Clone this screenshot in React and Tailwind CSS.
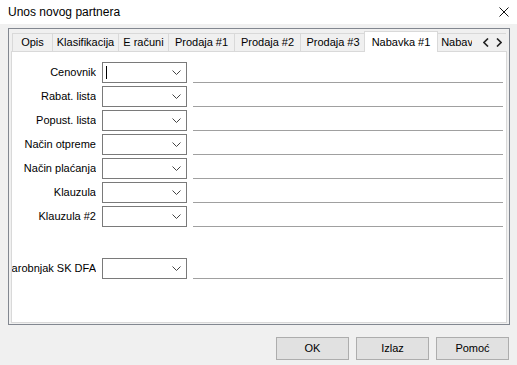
import React from 'react';

const tabs = [
    { label: 'Opis', w: 'w-[41px]' },
    { label: 'Klasifikacija', w: 'w-[66px]' },
    { label: 'E računi', w: 'w-[50px]' },
    { label: 'Prodaja #1', w: 'w-[66px]' },
    { label: 'Prodaja #2', w: 'w-[66px]' },
    { label: 'Prodaja #3', w: 'w-[65px]' },
    { label: 'Nabavka #1', w: 'w-[74px]', active: true },
    { label: 'Nabavka #2', w: 'w-[70px]' },
];

const rows = [
    { label: 'Cenovnik', cursor: true },
    { label: 'Rabat. lista' },
    { label: 'Popust. lista' },
    { label: 'Način otpreme' },
    { label: 'Način plaćanja' },
    { label: 'Klauzula' },
    { label: 'Klauzula #2' },
    { label: 'Čarobnjak SK DFA', spaced: true },
];

const Chevron = ({ dir = 'down' }) => {
    if (dir === 'left') {
        return (
            <svg width="6" height="9" viewBox="0 0 6 9">
                <path d="M5 0.5 L1 4.5 L5 8.5" fill="none" stroke="#222" strokeWidth="1.6" />
            </svg>
        );
    }
    if (dir === 'right') {
        return (
            <svg width="6" height="9" viewBox="0 0 6 9">
                <path d="M1 0.5 L5 4.5 L1 8.5" fill="none" stroke="#222" strokeWidth="1.6" />
            </svg>
        );
    }
    return (
        <svg width="9" height="5" viewBox="0 0 9 5">
            <path d="M0.5 0.5 L4.5 4.5 L8.5 0.5" fill="none" stroke="#444" strokeWidth="1" />
        </svg>
    );
};

const FormRow = ({ label, cursor, spaced }) => (
    <div className={`flex items-end h-[21px] ${spaced ? 'mt-[28px]' : ''}`}>
        <div className="w-[84px] h-[21px] flex items-center justify-end overflow-hidden whitespace-nowrap text-black">
            {label}
        </div>
        <div className="ml-[6px] w-[85px] h-[21px] border border-[#7a7a7a] bg-white flex items-center justify-between pl-[3px] pr-[5px]">
            {cursor ? <div className="w-px h-[13px] bg-black"></div> : <div></div>}
            <Chevron />
        </div>
        <div className="ml-[6px] w-[310px] h-px bg-[#a0a0a0]"></div>
    </div>
);

const DialogButton = ({ children }) => (
    <button className="w-[73px] h-[23px] bg-[#e1e1e1] border border-[#adadad] text-black text-[11px]">
        {children}
    </button>
);

export default function App() {
    return (
        <div className="w-[517px] h-[365px] bg-[#f0f0f0] flex flex-col text-[11px] font-['Liberation_Sans',Arial,sans-serif] overflow-hidden select-none">
            {/* Title bar */}
            <div className="h-[24px] bg-white flex items-center justify-between pl-[8px] pr-[8px]">
                <span className="text-[12px] text-black">Unos novog partnera</span>
                <svg width="10" height="10" viewBox="0 0 10 10">
                    <path d="M0.5 0.5 L9.5 9.5 M9.5 0.5 L0.5 9.5" stroke="#111" strokeWidth="1" />
                </svg>
            </div>

            {/* Frame */}
            <div className="mt-[4px] ml-[8px] mr-[7px] h-[297px] border border-[#828790] pt-[2px] px-[1px] pb-[1px] flex flex-col">
                {/* Tab strip */}
                <div className="relative z-10 h-[21px] mb-[-1px] overflow-hidden flex items-start pl-[2px]">
                    {tabs.map((t, i) =>
                        t.active ? (
                            <div
                                key={t.label}
                                className={`${t.w} shrink-0 h-[21px] -ml-[2px] -mr-[2px] relative z-10 bg-white border border-b-0 border-[#d9d9d9] flex items-center justify-center text-black`}
                            >
                                {t.label}
                            </div>
                        ) : (
                            <div
                                key={t.label}
                                className={`${t.w} shrink-0 h-[18px] mt-[2px] bg-[#f0f0f0] border-t border-r ${i === 0 ? 'border-l' : ''} border-[#d9d9d9] flex items-center justify-center whitespace-nowrap overflow-hidden text-black`}
                            >
                                {t.label}
                            </div>
                        )
                    )}
                    <div className="absolute right-0 top-[3px] w-[36px] h-[17px] bg-[#f0f0f0] z-20 flex items-center justify-between pl-[11px] pr-[6px]">
                        <Chevron dir="left" />
                        <Chevron dir="right" />
                    </div>
                </div>

                {/* Tab page */}
                <div className="flex-1 ml-[1px] mr-px bg-white border border-[#d9d9d9] pt-[10px] flex flex-col gap-[3px]">
                    {rows.map((r) => (
                        <FormRow key={r.label} {...r} />
                    ))}
                </div>
            </div>

            {/* Buttons */}
            <div className="mt-[12px] flex justify-end gap-[7px] pr-[8px]">
                <DialogButton>OK</DialogButton>
                <DialogButton>Izlaz</DialogButton>
                <DialogButton>Pomoć</DialogButton>
            </div>
        </div>
    );
}
